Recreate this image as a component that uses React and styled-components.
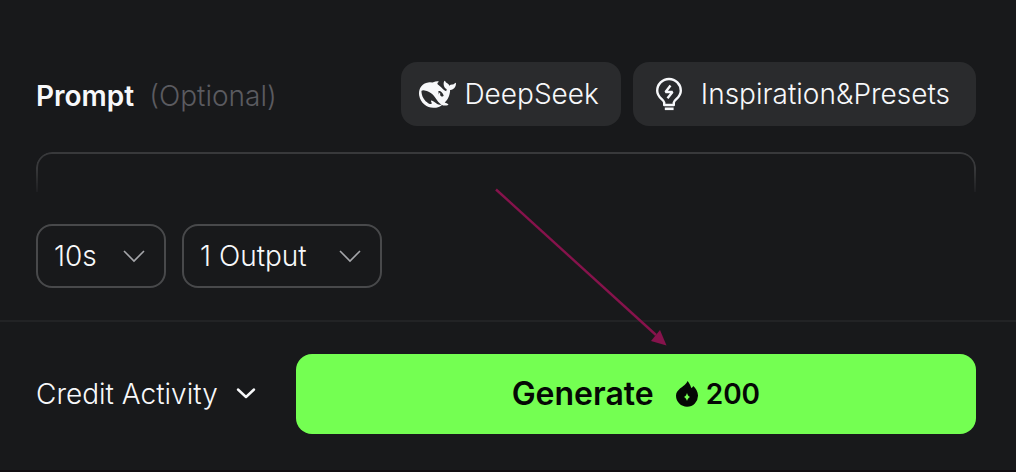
import React from "react";
import styled, { createGlobalStyle } from "styled-components";

const Colours = {
    PAGE: "#18191b",
    SURFACE: "#2a2b2d",
    LINE: "#222325",
    BORDER: "#48494b",
    BORDER_DARK: "#38393b",
    EDGE: "#110e12",
    TEXT: "#f7f8fa",
    TEXT_MUTED: "#5b5b60",
    CHEVRON: "#a5a6aa",
    ACCENT: "#74ff52",
    BLACK: "#050805",
    ARROW: "#86134c",
};

export default function App() {
    return (
        <>
            <GlobalStyle />
            <Panel>
                <PromptSection>
                    <Header>
                        <Label htmlFor="prompt">
                            Prompt <span className="optional">(Optional)</span>
                        </Label>
                        <Actions>
                            <ActionButton type="button" $gap={8} $padding="0 22px 0 18px">
                                <DeepSeekIcon />
                                DeepSeek
                            </ActionButton>
                            <ActionButton type="button" $gap={12} $padding="0 26px 0 16px">
                                <BulbIcon />
                                Inspiration&amp;Presets
                            </ActionButton>
                        </Actions>
                    </Header>
                    <PromptInput id="prompt" />
                    <Options>
                        <Dropdown label="Duration" value="10s" width={130} />
                        <Dropdown label="Outputs" value="1 Output" width={200} />
                    </Options>
                </PromptSection>
                <Footer>
                    <CreditButton type="button">
                        Credit Activity
                        <svg width="20" height="12" viewBox="0 0 20 12" fill="none">
                            <path
                                d="M2 1.5L10 9L18 1.5"
                                stroke="currentColor"
                                strokeWidth="2.4"
                                strokeLinecap="round"
                                strokeLinejoin="round"
                            />
                        </svg>
                    </CreditButton>
                    <GenerateButton type="button">
                        Generate
                        <Cost>
                            <FlameIcon />
                            200
                        </Cost>
                    </GenerateButton>
                </Footer>
                <Arrow width="174" height="160" viewBox="0 0 174 160">
                    <path d="M2 1.5L162 147" stroke={Colours.ARROW} strokeWidth="2.4" />
                    <path d="M172.5 157.5L157 153L166 142Z" fill={Colours.ARROW} />
                </Arrow>
            </Panel>
        </>
    );
}

function Dropdown({ label, value, width }) {
    return (
        <SelectBox $width={width}>
            <select aria-label={label} defaultValue={value}>
                <option>{value}</option>
            </select>
            <svg width="22" height="14" viewBox="0 0 22 14" fill="none">
                <path d="M1 2L11 12L21 2" stroke={Colours.CHEVRON} strokeWidth="1.6" />
            </svg>
        </SelectBox>
    );
}

function DeepSeekIcon() {
    return (
        <svg width="37" height="37" viewBox="0 0 24 24" fill="currentColor">
            <path d="M23.748 4.482c-.254-.124-.364.113-.512.234-.051.039-.094.09-.137.136-.372.397-.806.657-1.373.626-.829-.046-1.537.214-2.163.848-.133-.782-.575-1.248-1.247-1.548-.352-.156-.708-.311-.955-.65-.172-.241-.219-.51-.305-.774-.055-.16-.11-.323-.293-.35-.2-.031-.278.136-.356.276-.313.572-.434 1.202-.422 1.84.027 1.436.633 2.58 1.838 3.393.137.093.172.187.129.323-.082.28-.18.552-.266.833-.055.179-.137.217-.329.14a5.526 5.526 0 01-1.736-1.18c-.857-.828-1.631-1.742-2.597-2.458a11.365 11.365 0 00-.689-.471c-.985-.957.13-1.743.388-1.836.27-.098.093-.432-.779-.428-.872.004-1.67.295-2.687.684a3.055 3.055 0 01-.465.137 9.597 9.597 0 00-2.883-.102c-1.885.21-3.39 1.102-4.497 2.623C.082 8.606-.231 10.684.152 12.85c.403 2.284 1.569 4.175 3.36 5.653 1.858 1.533 3.997 2.284 6.438 2.14 1.482-.085 3.133-.284 4.994-1.86.47.234.962.327 1.78.397.63.059 1.236-.03 1.705-.128.735-.156.684-.837.419-.961-2.155-1.004-1.682-.595-2.113-.926 1.096-1.296 2.746-2.642 3.392-7.003.05-.347.007-.565 0-.845-.004-.17.035-.237.23-.256a4.173 4.173 0 001.545-.475c1.396-.763 1.96-2.015 2.093-3.517.02-.23-.004-.467-.247-.588zM11.581 18c-2.089-1.642-3.102-2.183-3.52-2.16-.392.024-.321.471-.235.763.09.288.207.486.371.739.114.167.192.416-.113.603-.673.416-1.842-.14-1.897-.167-1.361-.802-2.5-1.86-3.301-3.307-.774-1.393-1.224-2.887-1.298-4.482-.02-.386.093-.522.477-.592a4.696 4.696 0 011.529-.039c2.132.312 3.946 1.265 5.468 2.774.868.86 1.525 1.887 2.202 2.891.72 1.066 1.494 2.082 2.48 2.914.348.292.625.514.891.677-.802.09-2.14.11-3.054-.614zm1-6.44a.306.306 0 01.415-.287.302.302 0 01.2.288.306.306 0 01-.31.307.303.303 0 01-.304-.308zm3.11 1.596c-.2.081-.399.151-.59.16a1.245 1.245 0 01-.798-.254c-.274-.23-.47-.358-.552-.758a1.73 1.73 0 01.016-.588c.07-.327-.008-.537-.239-.727-.187-.156-.426-.199-.688-.199a.559.559 0 01-.254-.078c-.11-.114-.2-.387-.087-.59.028-.055.16-.178.192-.201.356-.202.767-.136 1.146.016.352.144.618.408 1.001.782.391.451.462.576.685.914.176.265.336.537.445.848.067.195-.019.354-.25.452z" />
        </svg>
    );
}

function BulbIcon() {
    return (
        <svg width="40" height="40" viewBox="0 0 40 40" fill="none">
            <path
                d="M15.2 31V28.5C14.6 25.5 8.2 23.5 8.2 16.8A11.8 11.8 0 0 1 31.8 16.8C31.8 23.5 25.4 25.5 24.8 28.5V31Z"
                stroke="currentColor"
                strokeWidth="2.4"
                strokeLinejoin="round"
            />
            <path d="M15.8 34.8H24.6" stroke="currentColor" strokeWidth="2.6" />
            <path
                d="M21.5 11.5L16.5 18H23.5L18.5 24.2"
                stroke="currentColor"
                strokeWidth="2.4"
                strokeLinejoin="bevel"
            />
        </svg>
    );
}

function FlameIcon() {
    return (
        <svg width="22" height="26" viewBox="0 0 22 26" fill="currentColor">
            <path
                fillRule="evenodd"
                d="M11.5 0C12.8 1.8 14.5 3.6 15.2 7C16.2 6.6 16.9 5.9 17.2 5C19.5 7.2 22 10.5 22 14.6A11 11 0 0 1 0 14.8C0 11.8 1.6 9.8 4 7.6C6.8 5.2 10.3 3.6 11.5 0ZM11 12C11.6 14 12.2 15 14 16C12.2 17 11.6 18 11 20C10.4 18 9.8 17 8 16C9.8 15 10.4 14 11 12Z"
            />
        </svg>
    );
}

const GlobalStyle = createGlobalStyle`
    body {
        background: ${Colours.PAGE};
        margin: 0;
    }

    body, button, select, textarea {
        color: ${Colours.TEXT};
        font-family: Inter, "Liberation Sans", sans-serif;
        font-size: 28px;
        font-weight: 300;
        line-height: 36px;
    }

    * {
        box-sizing: border-box;
    }

    button {
        border: none;
        cursor: pointer;
        white-space: nowrap;
    }

    svg {
        flex-shrink: 0;
    }
`;

const Panel = styled.main`
    border-bottom: 2px solid ${Colours.EDGE};
    min-height: 100vh;
    position: relative;
`;

const PromptSection = styled.section`
    border-bottom: 2px solid ${Colours.LINE};
    padding: 62px 40px 32px 36px;
`;

const Header = styled.div`
    align-items: center;
    display: flex;
    justify-content: space-between;
    margin-bottom: 26px;
`;

const Label = styled.label`
    font-weight: 600;
    padding-top: 4px;

    .optional {
        color: ${Colours.TEXT_MUTED};
        font-weight: 300;
        margin-left: 8px;
    }
`;

const Actions = styled.div`
    display: flex;
    gap: 12px;
`;

const ActionButton = styled.button`
    align-items: center;
    background: ${Colours.SURFACE};
    border-radius: 16px;
    display: flex;
    gap: ${(props) => props.$gap}px;
    height: 64px;
    padding: ${(props) => props.$padding};
`;

// the side borders fade out towards the bottom
const PromptInput = styled.textarea`
    background: transparent;
    border: 2px solid ${Colours.BORDER_DARK};
    border-bottom: none;
    border-radius: 16px 16px 0 0;
    display: block;
    height: 40px;
    mask-image: linear-gradient(#000 40%, rgba(0, 0, 0, 0.2));
    outline: none;
    padding: 0 16px;
    resize: none;
    width: 100%;
`;

const Options = styled.div`
    display: flex;
    gap: 16px;
    margin-top: 32px;
`;

const SelectBox = styled.div`
    align-items: center;
    display: grid;
    width: ${(props) => props.$width}px;

    select {
        appearance: none;
        background: transparent;
        border: 2px solid ${Colours.BORDER};
        border-radius: 16px;
        grid-area: 1 / 1;
        height: 64px;
        padding: 0 48px 0 16px;
        width: 100%;
    }

    svg {
        grid-area: 1 / 1;
        justify-self: end;
        margin-right: 21px;
        pointer-events: none;
    }
`;

const Footer = styled.footer`
    align-items: center;
    display: flex;
    gap: 40px;
    padding: 32px 40px 36px 36px;
`;

const CreditButton = styled.button`
    align-items: center;
    background: transparent;
    display: flex;
    gap: 18px;
    padding: 0;
`;

const GenerateButton = styled.button`
    align-items: center;
    background: ${Colours.ACCENT};
    border-radius: 16px;
    color: ${Colours.BLACK};
    display: flex;
    flex-grow: 1;
    font-size: 32px;
    font-weight: 600;
    gap: 22px;
    height: 80px;
    justify-content: center;
`;

const Cost = styled.span`
    align-items: center;
    display: flex;
    font-size: 28px;
    gap: 8px;
`;

const Arrow = styled.svg`
    left: 494px;
    pointer-events: none;
    position: absolute;
    top: 188px;
`;
